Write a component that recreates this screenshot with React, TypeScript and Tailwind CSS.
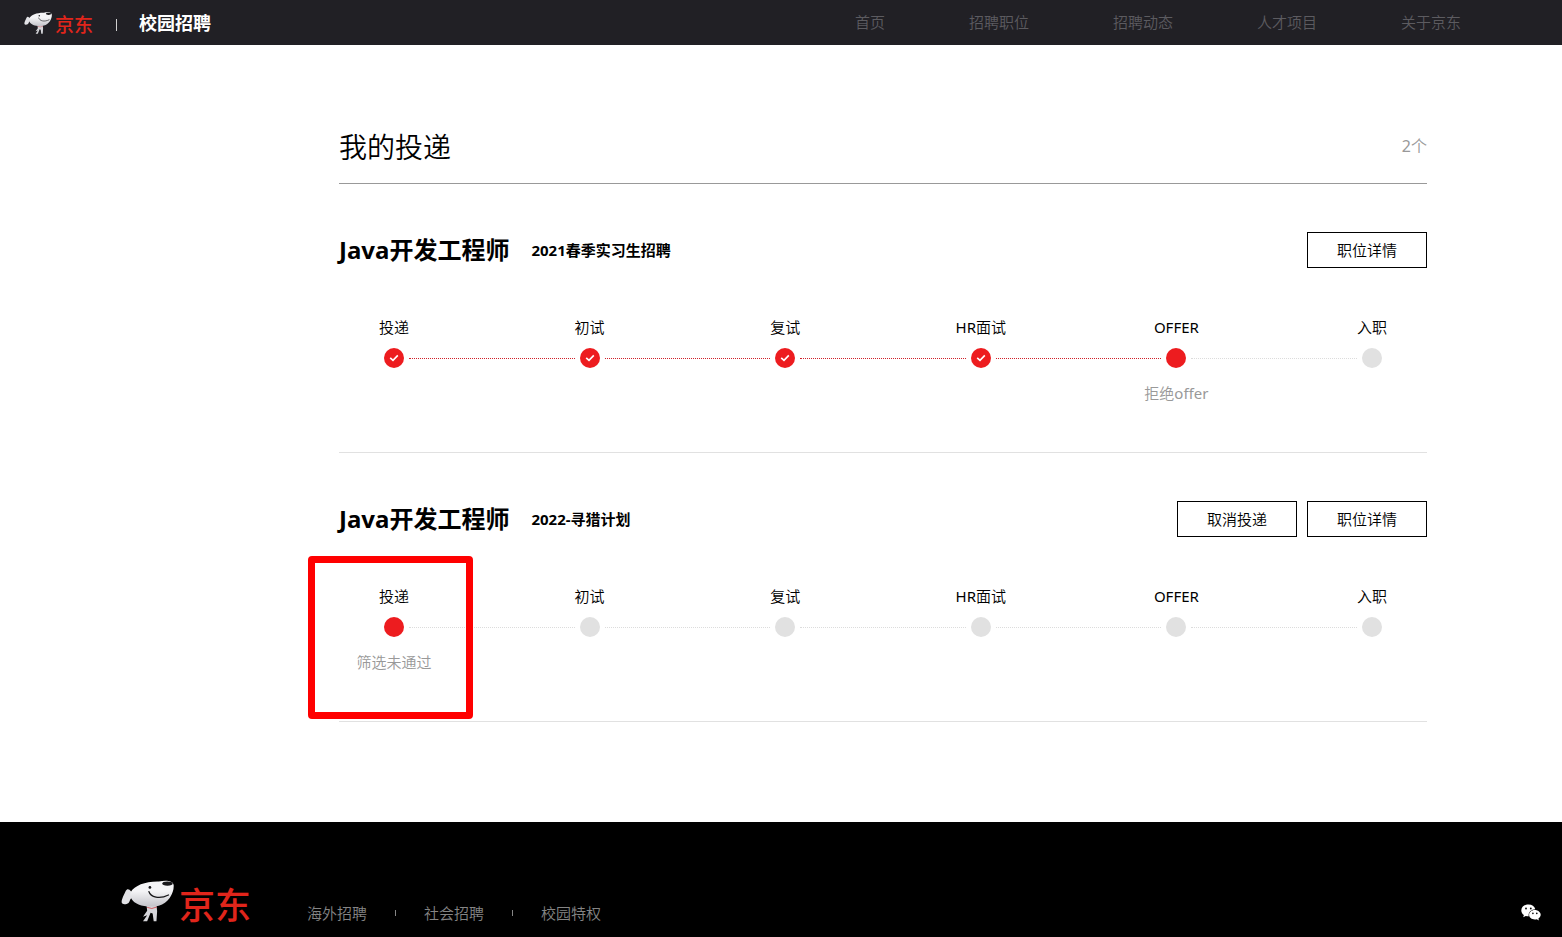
import { clsx } from "clsx";

type StepState = "done" | "current" | "todo";

type Application = {
  title: string;
  batch: string;
  cancellable?: boolean;
  /** Index of the stage the application stopped at. */
  current: number;
  note: string;
  highlight?: boolean;
};

const NAV = ["首页", "招聘职位", "招聘动态", "人才项目", "关于京东"];

const FOOTER_LINKS = ["海外招聘", "社会招聘", "校园特权"];

const STAGES = ["投递", "初试", "复试", "HR面试", "OFFER", "入职"];

const APPLICATIONS: Application[] = [
  {
    title: "Java开发工程师",
    batch: "2021春季实习生招聘",
    current: 4,
    note: "拒绝offer",
  },
  {
    title: "Java开发工程师",
    batch: "2022-寻猎计划",
    cancellable: true,
    current: 0,
    note: "筛选未通过",
    highlight: true,
  },
];

// The DemiLight cut is only for running text; headings and the logo use the full family.
const STRONG_FONT = "font-['Noto_Sans','Noto_Sans_CJK_SC',sans-serif]";

function Mascot({ className }: { className: string }) {
  return (
    <svg viewBox="33 34 154 121" className={className} aria-hidden="true">
      <defs>
        <linearGradient id="mascot-fill" x1="0" y1="0" x2="0" y2="1">
          <stop offset="0.4" stopColor="#f4f4f6" />
          <stop offset="1" stopColor="#c3c3c9" />
        </linearGradient>
      </defs>
      {/* ear */}
      <path
        d="M62 66C57 59 50 58 47 65C43 75 34 89 35 99C37 106 49 104 55 100C60 95 58 89 64 86Z"
        fill="#e2e2e6"
      />
      {/* body and legs */}
      <path
        d="M107 105L136 105L138 124L136 153L128 153L125 131L119 129L109 153L97 153L109 136L97 140L109 123Z"
        fill="#d6d6da"
      />
      {/* head */}
      <path
        d="M61 69C73 49 105 37 143 38C160 34 184 34 186 48C188 70 171 101 143 108C110 116 72 106 63 87C60 81 58 75 61 69Z"
        fill="url(#mascot-fill)"
      />
      <ellipse cx="168" cy="44" rx="15" ry="6" fill="#17171a" />
      <circle cx="117" cy="55" r="4" fill="#17171a" />
      <path
        d="M114 67C119 84 145 90 171 77"
        fill="none"
        stroke="#17171a"
        strokeWidth="3.5"
        strokeLinecap="round"
      />
      <path d="M109 113Q122 120 137 112" fill="none" stroke="#c9252b" strokeWidth="2" />
    </svg>
  );
}

function WechatIcon() {
  return (
    <svg viewBox="0 0 20 17" className="h-[17px] w-5" aria-hidden="true">
      <path
        d="M7.5 0.5C3.4 0.5 0.3 3.1 0.3 6.4C0.3 8.3 1.3 9.9 2.9 11L2.2 13.2L4.8 11.9C5.8 12.2 6.8 12.3 7.7 12.3C7 8.6 10 5.4 14.3 5.2C13.6 2.5 10.9 0.5 7.5 0.5Z"
        fill="#fff"
      />
      <path
        d="M13.8 6C10.5 6 8.1 8.2 8.1 10.8C8.1 13.5 10.6 15.5 13.8 15.5C14.5 15.5 15.2 15.4 15.8 15.2L17.9 16.4L17.4 14.5C18.8 13.6 19.7 12.3 19.7 10.8C19.7 8.2 17 6 13.8 6Z"
        fill="#fff"
      />
      <g fill="#000">
        <circle cx="5" cy="4.5" r="0.9" />
        <circle cx="9.8" cy="4.5" r="0.9" />
        <circle cx="11.9" cy="9.4" r="0.8" />
        <circle cx="15.8" cy="9.4" r="0.8" />
      </g>
    </svg>
  );
}

function Header() {
  return (
    <header className="flex h-[45px] items-center justify-between bg-[#212025] pr-[101px] pl-6">
      <div className={clsx("flex items-center", STRONG_FONT)}>
        <a href="#home" className="flex items-center gap-[3px]">
          <Mascot className="h-[22px] w-7" />
          <span className="pt-1 text-[19px] leading-6 font-medium text-[#e1251b]">京东</span>
        </a>
        <span className="mt-1 ml-[23px] h-3 w-px bg-[#d0d0d0]" />
        <span className="ml-[22px] text-lg leading-6 font-bold text-white">校园招聘</span>
      </div>
      <nav className="flex gap-[84px] pb-[2px] text-[15px] leading-6 text-[#5c5b60]">
        {NAV.map((item) => (
          <a key={item} href={`#${item}`}>
            {item}
          </a>
        ))}
      </nav>
    </header>
  );
}

function StepDot({ state }: { state: StepState }) {
  return (
    <span
      className={clsx(
        "mt-[10px] flex size-5 items-center justify-center rounded-full",
        state === "todo" ? "bg-[#e1e1e1]" : "bg-[#ed1c1f]"
      )}
    >
      {state === "done" && (
        <svg viewBox="0 0 10 10" className="size-[10px]" aria-hidden="true">
          <path d="M1.2 4.8L4 7.4L8.8 2.4" fill="none" stroke="#fff" strokeWidth="1.6" />
        </svg>
      )}
    </span>
  );
}

function Steps({ current, note, highlight }: Pick<Application, "current" | "note" | "highlight">) {
  return (
    <ol className="mt-12 flex">
      {STAGES.map((stage, i) => {
        const state: StepState = i < current ? "done" : i === current ? "current" : "todo";
        return (
          <li key={stage} className={clsx("flex", i < STAGES.length - 1 && "flex-1")}>
            <div className="relative flex w-[110px] shrink-0 flex-col items-center text-[15px] leading-[22px]">
              <span>{stage}</span>
              <StepDot state={state} />
              <span className="mt-[14px] h-[22px] text-[#999]">{state === "current" && note}</span>
              {highlight && state === "current" && (
                <span className="absolute -top-[29px] -left-[31px] h-[163px] w-[165px] rounded-sm border-[7px] border-[#ff0000]" />
              )}
            </div>
            {/* The line runs under both neighbouring columns, up to 5px from each dot */}
            {i < STAGES.length - 1 && (
              <span
                className={clsx(
                  "-mx-10 mt-[42px] h-px flex-1 border-t border-dotted",
                  state === "done" ? "border-[#d0202a]" : "border-[#dcdcdc]"
                )}
              />
            )}
          </li>
        );
      })}
    </ol>
  );
}

function ActionButton({ label }: { label: string }) {
  return (
    <button type="button" className="h-9 w-[120px] border border-black text-[15px] leading-[22px]">
      {label}
    </button>
  );
}

function ApplicationCard({ application }: { application: Application }) {
  const { title, batch, cancellable, current, note, highlight } = application;
  return (
    <section className="border-b border-[#e1e1e1] pt-12 pb-12">
      <div className="flex items-center">
        <h2 className={clsx("text-2xl leading-9 font-bold", STRONG_FONT)}>{title}</h2>
        <span className={clsx("ml-[22px] text-[15px] leading-[22px] font-bold", STRONG_FONT)}>
          {batch}
        </span>
        <div className="ml-auto flex gap-[10px]">
          {cancellable && <ActionButton label="取消投递" />}
          <ActionButton label="职位详情" />
        </div>
      </div>
      <Steps current={current} note={note} highlight={highlight} />
    </section>
  );
}

function Footer() {
  return (
    <footer className="flex h-[115px] items-start justify-between bg-black pt-[58px] pr-[21px] pl-[121px]">
      <div className="flex items-start">
        <a href="#home" className={clsx("flex items-start gap-[5px]", STRONG_FONT)}>
          <Mascot className="h-[42px] w-[53px]" />
          <span className="pt-2 text-4xl leading-9 font-medium text-[#e1251b]">京东</span>
        </a>
        <ul className="mt-[21px] ml-14 flex text-[15px] leading-6 text-[#858585]">
          {FOOTER_LINKS.map((item, i) => (
            <li key={item} className="flex items-center">
              {i > 0 && <span className="mx-7 h-[6px] w-px bg-[#858585]" />}
              <a href={`#${item}`}>{item}</a>
            </li>
          ))}
        </ul>
      </div>
      <button type="button" aria-label="微信" className="mt-6">
        <WechatIcon />
      </button>
    </footer>
  );
}

export default function App() {
  return (
    <div className="bg-white font-['Noto_Sans','Noto_Sans_CJK_SC_DemiLight','Noto_Sans_CJK_SC',sans-serif] text-black">
      <Header />
      <main className="pt-[79px] pr-[135px] pb-[100px] pl-[339px]">
        <div className="flex items-center justify-between border-b border-[#999] pb-3">
          <h1 className="text-[28px] leading-[47px]">我的投递</h1>
          <span className="pb-1 text-base leading-6 text-[#999]">2个</span>
        </div>
        {APPLICATIONS.map((application) => (
          <ApplicationCard key={application.batch} application={application} />
        ))}
      </main>
      <Footer />
    </div>
  );
}
